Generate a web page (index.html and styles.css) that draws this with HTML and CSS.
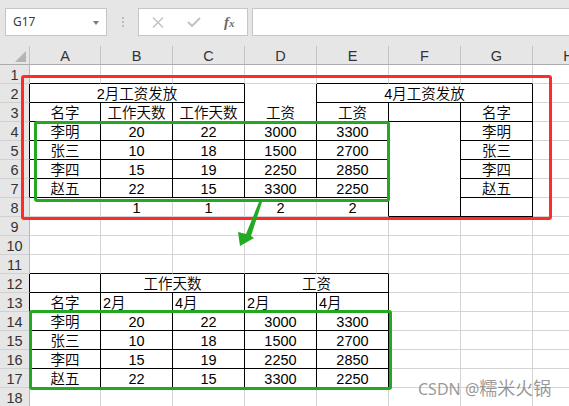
FILE: index.html
```html
<!DOCTYPE html>
<html lang="zh-CN">
<head>
<meta charset="utf-8">
<title>Sheet</title>
<link rel="stylesheet" href="styles.css">
</head>
<body>
<div class="app">
  <div class="toolbar">
    <div class="namebox"><span class="ref">G17</span><span class="caret"></span></div>
    <div class="grip"><i></i><i></i><i></i></div>
    <div class="fbtns">
      <span class="slot"><svg class="ico" width="12" height="11" viewBox="0 0 12 11"><path d="M1 0.5 L11 10.5 M11 0.5 L1 10.5" stroke="#c2c2c2" stroke-width="1.4" fill="none"/></svg></span>
      <span class="slot"><svg class="ico" width="14" height="10" viewBox="0 0 14 10"><path d="M1 5 L5 9 L13 1" stroke="#c2c2c2" stroke-width="2" fill="none"/></svg></span>
      <span class="slot"><span class="fx">f<span class="fxx">x</span></span></span>
    </div>
    <div class="finput"></div>
  </div>
  <div class="sheet">
    <table class="grid">
      <colgroup>
        <col class="c-rh"><col class="c-a"><col class="c-n"><col class="c-n"><col class="c-n"><col class="c-n"><col class="c-n"><col class="c-n"><col class="c-n">
      </colgroup>
      <tr class="hdr"><th class="corner"><span class="tri"></span></th><th>A</th><th>B</th><th>C</th><th>D</th><th>E</th><th>F</th><th>G</th><th>H</th></tr>
      <tr><td class="rh">1</td><td class="b"></td><td class="b"></td><td class="b"></td><td></td><td class="b"></td><td class="b"></td><td class="b"></td><td></td></tr>
      <tr><td class="rh k">2</td><td class="rb" colspan="3">2月工资发放</td><td class="rb" rowspan="2">工资</td><td class="rb" colspan="3">4月工资发放</td><td></td></tr>
      <tr><td class="rh k">3</td><td class="rb">名字</td><td class="rb">工作天数</td><td class="rb">工作天数</td><td class="rb">工资</td><td class="rb"></td><td class="rb">名字</td><td></td></tr>
      <tr><td class="rh k">4</td><td class="rb">李明</td><td class="rb">20</td><td class="rb">22</td><td class="rb">3000</td><td class="rb">3300</td><td class="rb" rowspan="5"></td><td class="rb">李明</td><td></td></tr>
      <tr><td class="rh k">5</td><td class="rb">张三</td><td class="rb">10</td><td class="rb">18</td><td class="rb">1500</td><td class="rb">2700</td><td class="rb">张三</td><td></td></tr>
      <tr><td class="rh k">6</td><td class="rb">李四</td><td class="rb">15</td><td class="rb">19</td><td class="rb">2250</td><td class="rb">2850</td><td class="rb">李四</td><td></td></tr>
      <tr><td class="rh k">7</td><td class="rb">赵五</td><td class="rb">22</td><td class="rb">15</td><td class="rb">3300</td><td class="rb">2250</td><td class="rb">赵五</td><td></td></tr>
      <tr><td class="rh">8</td><td></td><td>1</td><td>1</td><td>2</td><td class="r">2</td><td class="rb"></td><td></td></tr>
      <tr><td class="rh">9</td><td></td><td></td><td></td><td></td><td></td><td></td><td></td><td></td></tr>
      <tr><td class="rh">10</td><td></td><td></td><td></td><td></td><td></td><td></td><td></td><td></td></tr>
      <tr><td class="rh">11</td><td class="b"></td><td class="b"></td><td class="b"></td><td class="b"></td><td class="b"></td><td></td><td></td><td></td></tr>
      <tr><td class="rh k">12</td><td class="rb"></td><td class="rb" colspan="2">工作天数</td><td class="rb" colspan="2">工资</td><td></td><td></td><td></td></tr>
      <tr><td class="rh k">13</td><td class="rb">名字</td><td class="rb l">2月</td><td class="rb l">4月</td><td class="rb l">2月</td><td class="rb l">4月</td><td></td><td></td><td></td></tr>
      <tr><td class="rh k">14</td><td class="rb">李明</td><td class="rb">20</td><td class="rb">22</td><td class="rb">3000</td><td class="rb">3300</td><td></td><td></td><td></td></tr>
      <tr><td class="rh k">15</td><td class="rb">张三</td><td class="rb">10</td><td class="rb">18</td><td class="rb">1500</td><td class="rb">2700</td><td></td><td></td><td></td></tr>
      <tr><td class="rh k">16</td><td class="rb">李四</td><td class="rb">15</td><td class="rb">19</td><td class="rb">2250</td><td class="rb">2850</td><td></td><td></td><td></td></tr>
      <tr><td class="rh k">17</td><td class="rb">赵五</td><td class="rb">22</td><td class="rb">15</td><td class="rb">3300</td><td class="rb">2250</td><td></td><td></td><td></td></tr>
      <tr><td class="rh">18</td><td></td><td></td><td></td><td></td><td></td><td></td><td></td><td></td></tr>
    </table>
  </div>

  <div class="mark mark-red"></div>
  <div class="mark mark-green1"></div>
  <div class="mark mark-green2"></div>
  <svg class="arrow" width="569" height="406" viewBox="0 0 569 406">
    <polygon points="259,202 262,202 251,236 254,238 240,246 238,232 246,234" fill="#22aa22"/>
  </svg>
  <div class="watermark">CSDN @<span class="wm-cjk">糯米火锅</span></div>
</div>
</body>
</html>
```

FILE: styles.css
```css
html, body {
  margin: 0;
  padding: 0;
  background: #ffffff;
}

.app {
  position: relative;
  width: 569px;
  height: 406px;
  overflow: hidden;
  background: #ffffff;
}

/* ---------- formula toolbar ---------- */
.toolbar {
  display: flex;
  align-items: flex-start;
  height: 46px;
  box-sizing: border-box;
  padding: 8px 0 0 5px;
  background: #e6e6e6;
}

.namebox {
  width: 102px;
  height: 28px;
  box-sizing: border-box;
  border: 1px solid #c6c6c6;
  background: #ffffff;
  display: flex;
  align-items: center;
  justify-content: space-between;
  padding: 0 7px 0 7px;
}

.ref {
  font-family: "Noto Sans", "Liberation Sans", sans-serif;
  font-size: 12px;
  color: #3a3a3a;
  line-height: 14px;
}

.caret {
  width: 0;
  height: 0;
  border-left: 3.5px solid transparent;
  border-right: 3.5px solid transparent;
  border-top: 4px solid #7a7a7a;
  margin-top: 1px;
}

.grip {
  width: 31px;
  display: flex;
  flex-direction: column;
  align-items: center;
  gap: 2px;
  padding-top: 9px;
}

.grip i {
  display: block;
  width: 2px;
  height: 2px;
  background: #bdbdbd;
}

.fbtns {
  width: 110px;
  height: 28px;
  box-sizing: border-box;
  border: 1px solid #c6c6c6;
  background: #ffffff;
  display: flex;
  align-items: center;
  padding-left: 1px;
}

.slot {
  width: 36px;
  height: 26px;
  display: flex;
  align-items: center;
  justify-content: center;
}

.ico {
  display: block;
}

.fx {
  font-family: "Liberation Serif", serif;
  font-style: italic;
  font-weight: bold;
  font-size: 15px;
  color: #6b6b6b;
  line-height: 16px;
}

.fxx {
  font-size: 11px;
}

.finput {
  flex: 1;
  height: 28px;
  box-sizing: border-box;
  margin-left: 4px;
  margin-right: -4px;
  border: 1px solid #c6c6c6;
  background: #ffffff;
}

/* ---------- sheet grid ---------- */
.sheet {
  width: 569px;
  overflow: hidden;
}

.grid {
  border-collapse: separate;
  border-spacing: 0;
  table-layout: fixed;
  width: 605px;
  font-family: "Liberation Sans", "Noto Sans CJK SC", sans-serif;
  font-size: 14.5px;
  font-weight: 350;
  color: #000000;
}

.c-rh { width: 30px; }
.c-a { width: 71px; }
.c-n { width: 72px; }

.grid tr {
  height: 19px;
}

.grid td,
.grid th {
  padding: 2px 2px 0 2px;
  line-height: 16px;
  border-right: 1px solid #d4d4d4;
  border-bottom: 1px solid #d4d4d4;
  vertical-align: bottom;
  text-align: center;
  white-space: nowrap;
  overflow: hidden;
  font-weight: 350;
}

.grid th {
  background: #e6e6e6;
  color: #333333;
  border-right-color: #c4c4c4;
  border-bottom-color: #ababab;
}

.corner {
  position: relative;
}

.tri {
  position: absolute;
  right: 3px;
  bottom: 2px;
  width: 0;
  height: 0;
  border-left: 11px solid transparent;
  border-bottom: 11px solid #b4b4b4;
}

.grid td.rh {
  background: #e6e6e6;
  color: #333333;
  border-right-color: #b9b9b9;
  border-bottom-color: #d0d0d0;
}

.grid td.r,
.grid td.rb,
.grid td.rh.k {
  border-right-color: #000000;
}

.grid td.b,
.grid td.rb {
  border-bottom-color: #000000;
}

.grid td.l {
  text-align: left;
  padding-left: 2px;
}

/* ---------- annotation overlays ---------- */
.mark {
  position: absolute;
  box-sizing: border-box;
  border-radius: 3px;
  pointer-events: none;
}

.mark-red {
  left: 21px;
  top: 75px;
  width: 531px;
  height: 145px;
  border: 3px solid #ff2a2a;
}

.mark-green1 {
  left: 34px;
  top: 121px;
  width: 356px;
  height: 81px;
  border: 3px solid #22a822;
}

.mark-green2 {
  left: 29px;
  top: 310px;
  width: 363px;
  height: 80px;
  border: 3px solid #22a822;
}

.arrow {
  position: absolute;
  left: 0;
  top: 0;
  pointer-events: none;
}

.watermark {
  position: absolute;
  left: 418px;
  top: 377px;
  font-family: "Noto Sans", "Noto Sans CJK SC", sans-serif;
  font-size: 16px;
  line-height: 20px;
  color: rgba(120, 120, 120, 0.75);
  white-space: nowrap;
}

.wm-cjk {
  font-family: "Noto Sans CJK SC", sans-serif;
  font-size: 18px;
}
```
